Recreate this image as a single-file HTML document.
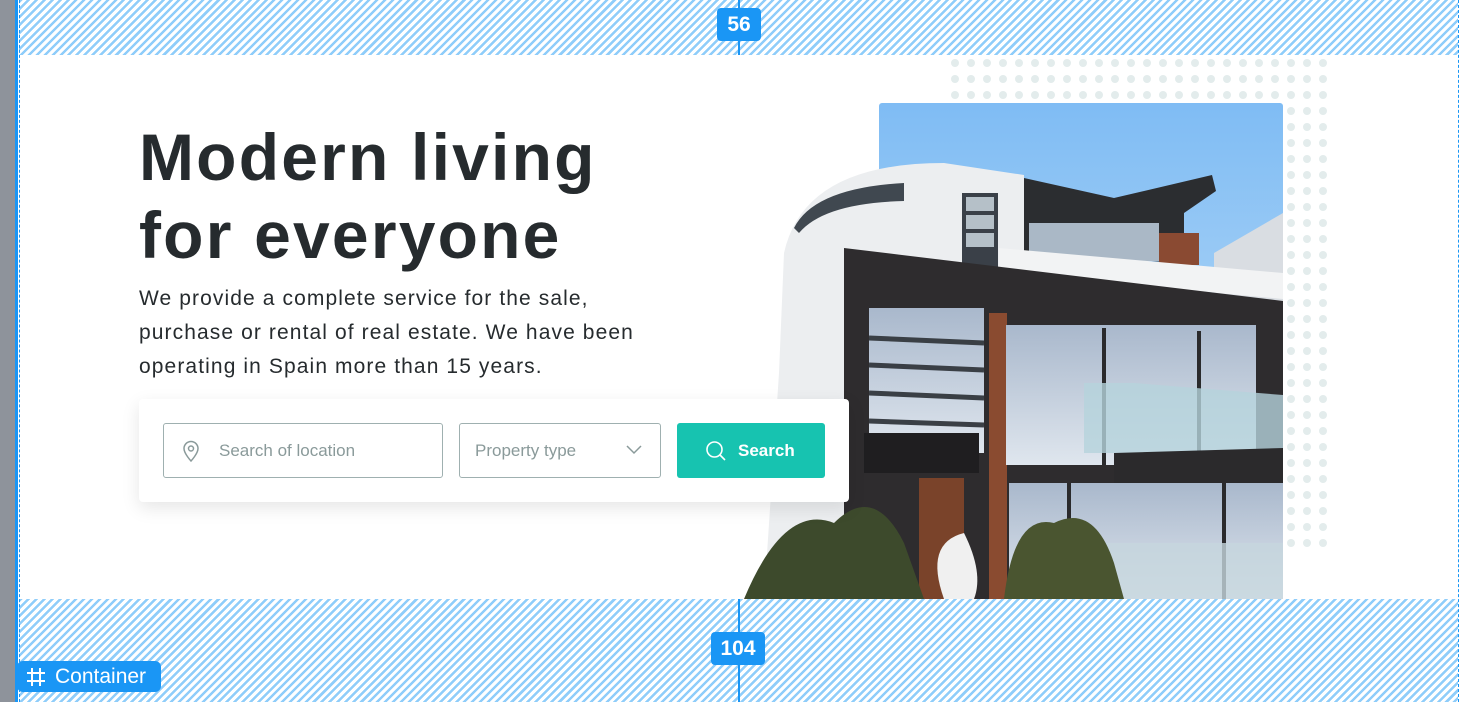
<!DOCTYPE html>
<html><head><meta charset="utf-8"><style>
*{margin:0;padding:0;box-sizing:border-box}
body{width:1460px;height:702px;position:relative;overflow:hidden;background:#fff;font-family:"Liberation Sans",sans-serif}
.hatch{position:absolute;left:19px;right:2px;background:repeating-linear-gradient(135deg,#8fcdfa 0 2.5px,#fff 2.5px 5.6px)}
.badge{position:absolute;background:#1a96f5;color:#fff;font-weight:bold;font-size:21px;border-radius:4px;text-align:center;line-height:33px}
h1{position:absolute;left:139px;top:118px;font-size:66px;line-height:78px;color:#262b2e;letter-spacing:2.2px;font-weight:bold}
p.t{position:absolute;left:139px;top:282px;font-size:21px;line-height:34px;color:#262b2e;letter-spacing:1.1px}
.card{position:absolute;left:139px;top:399px;width:710px;height:103px;background:#fff;border-radius:4px;box-shadow:0 6px 18px rgba(0,0,0,.10)}
.in{position:absolute;top:24px;height:55px;border:1px solid #9fb0b0;border-radius:3px;color:#8a9a9a;font-size:17px;line-height:53px}
.btn{position:absolute;left:538px;top:24px;width:148px;height:55px;background:#17c3b0;border-radius:3px;color:#fff;font-weight:bold;font-size:17px;line-height:55px}
</style></head><body>
<div style="position:absolute;left:0;top:0;width:15px;height:702px;background:#8e939b"></div>
<div style="position:absolute;left:15px;top:0;width:3px;height:702px;background:#1a96f5"></div>
<div class="hatch" style="top:0;height:55px"></div>
<div class="hatch" style="top:599px;height:103px"></div>
<div style="position:absolute;left:19px;top:0;height:702px;border-left:1px dashed #1a96f5"></div>
<div style="position:absolute;left:1458px;top:0;height:702px;border-left:1px dashed #1a96f5"></div>
<div style="position:absolute;left:738px;top:0;width:2px;height:55px;background:#1a96f5"></div>
<div style="position:absolute;left:738px;top:599px;width:2px;height:103px;background:#1a96f5"></div>
<div class="badge" style="left:717px;top:8px;width:44px">56</div>
<div class="badge" style="left:711px;top:632px;width:54px">104</div>
<div class="badge" style="left:17px;top:661px;width:144px;height:31px;line-height:31px;font-weight:normal;font-size:21px;border-radius:6px;text-align:left;padding-left:38px">Container
 <svg style="position:absolute;left:9px;top:6px" width="20" height="20" viewBox="0 0 20 20" stroke="#fff" stroke-width="2"><path d="M6 1v18M14 1v18M1 6h18M1 14h18"/></svg></div>

<svg style="position:absolute;left:947px;top:55px" width="400" height="500">
<defs><pattern id="d" width="16" height="16" patternUnits="userSpaceOnUse" x="0" y="0"><circle cx="8" cy="8" r="4" fill="#e3ecec"/></pattern></defs>
<rect x="0" y="0" width="388" height="496" fill="url(#d)"/>
</svg>

<svg style="position:absolute;left:744px;top:103px" width="539" height="496" viewBox="0 0 539 496">
<defs><linearGradient id="sky" x1="0" y1="0" x2="0" y2="1"><stop offset="0" stop-color="#7fbcf4"/><stop offset="1" stop-color="#cfe6f7"/></linearGradient>
<linearGradient id="gl" x1="0" y1="0" x2="0" y2="1"><stop offset="0" stop-color="#a9b8cc"/><stop offset="1" stop-color="#dfe6ee"/></linearGradient></defs>
<rect x="135" y="0" width="404" height="496" rx="3" fill="url(#sky)"/>
<rect x="0" y="270" width="140" height="226" fill="#fff"/>
<path d="M539 110 L470 150 L470 496 L539 496Z" fill="#d9dde2"/>
<path d="M40 150 Q60 60 200 60 L280 72 L280 496 L20 496 L35 270Z" fill="#eceef0"/>
<path d="M50 125 Q70 85 160 80 L160 98 Q80 100 55 130Z" fill="#404850"/>
<rect x="218" y="90" width="36" height="75" fill="#3a4048"/>
<rect x="222" y="94" width="28" height="14" fill="#b5c0c8"/><rect x="222" y="112" width="28" height="14" fill="#b5c0c8"/><rect x="222" y="130" width="28" height="14" fill="#b5c0c8"/>
<path d="M280 75 L370 95 L468 72 L472 88 L440 110 L440 160 L280 150Z" fill="#2b2d30"/>
<rect x="285" y="120" width="130" height="38" fill="#aab8c6"/>
<rect x="415" y="130" width="40" height="32" fill="#8a4a32"/>
<path d="M255 145 L539 170 L539 196 L255 170Z" fill="#f2f3f4"/>
<path d="M100 145 L539 198 L539 496 L100 496Z" fill="#2e2c2e"/>
<rect x="125" y="205" width="115" height="145" fill="url(#gl)"/>
<g stroke="#3a3f45" stroke-width="5"><line x1="125" y1="235" x2="240" y2="240"/><line x1="125" y1="262" x2="240" y2="267"/><line x1="125" y1="290" x2="240" y2="295"/><line x1="125" y1="318" x2="240" y2="322"/></g>
<rect x="245" y="210" width="18" height="286" fill="#8a4b30"/>
<rect x="262" y="222" width="250" height="140" fill="url(#gl)"/>
<line x1="360" y1="225" x2="360" y2="362" stroke="#2a2a2c" stroke-width="4"/><line x1="455" y1="228" x2="455" y2="362" stroke="#2a2a2c" stroke-width="4"/>
<path d="M340 280 L390 280 L539 292 L539 350 L340 350Z" fill="#b5d3dc" opacity=".8"/>
<rect x="120" y="330" width="115" height="40" fill="#1f1e20"/>
<path d="M370 350 L539 345 L539 390 L370 385Z" fill="#2b2a2c"/>
<rect x="175" y="375" width="45" height="121" fill="#7a432a"/>
<rect x="265" y="380" width="274" height="116" fill="url(#gl)"/>
<line x1="325" y1="380" x2="325" y2="496" stroke="#2a2a2c" stroke-width="4"/><line x1="480" y1="380" x2="480" y2="496" stroke="#2a2a2c" stroke-width="4"/>
<rect x="360" y="440" width="179" height="56" fill="#c6d6dd" opacity=".8"/>
<path d="M0 496 Q40 400 90 420 Q130 380 160 440 L180 496Z" fill="#3d4a2c"/>
<path d="M200 496 Q180 440 220 430 Q240 470 230 496Z" fill="#f0f0f0"/>
<path d="M260 496 Q270 410 310 420 Q350 400 370 460 L380 496Z" fill="#4a5530"/>
</svg>

<h1>Modern living<br>for everyone</h1>
<p class="t">We provide a complete service for the sale,<br>purchase or rental of real estate. We have been<br>operating in Spain more than 15 years.</p>
<div class="card">
 <div class="in" style="left:24px;width:280px;padding-left:55px">
  <svg style="position:absolute;left:18px;top:16px" width="18" height="22" viewBox="0 0 18 22" fill="none" stroke="#8a9a9a" stroke-width="1.5"><path d="M9 21C9 21 2 13.5 2 8.5a7 7 0 0 1 14 0C16 13.5 9 21 9 21Z"/><circle cx="9" cy="8.5" r="2.5"/></svg>
  Search of location</div>
 <div class="in" style="left:320px;width:202px;padding-left:15px">Property type
  <svg style="position:absolute;left:166px;top:21px" width="16" height="10" viewBox="0 0 16 10" fill="none" stroke="#8a9a9a" stroke-width="1.5"><path d="M1 1l7 7 7-7"/></svg></div>
 <div class="btn"><svg style="position:absolute;left:28px;top:17px" width="22" height="22" viewBox="0 0 22 22" fill="none" stroke="#fff" stroke-width="1.6"><circle cx="9.5" cy="9.5" r="7.5"/><path d="M15 15l5 5"/></svg><span style="position:absolute;left:61px">Search</span></div>
</div>
</body></html>
